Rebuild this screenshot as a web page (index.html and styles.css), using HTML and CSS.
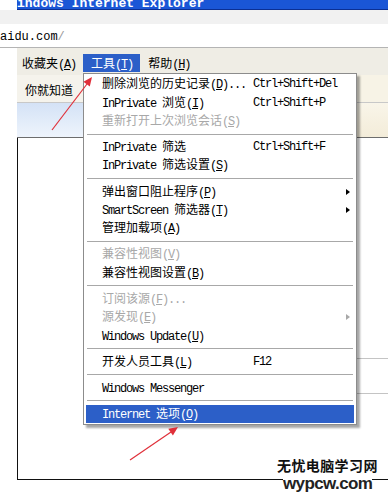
FILE: index.html
```html
<!DOCTYPE html>
<html>
<head>
<meta charset="utf-8">
<title>Internet Explorer 工具菜单</title>
<link rel="stylesheet" href="styles.css">
</head>
<body>
<div class="screen">
  <div class="titlebar"><span class="title">indows Internet Explorer</span></div>
  <div class="addrbar">
    <div class="addr-top"></div>
    <div class="addr-field"><span class="url">aidu.com<span class="slash">/</span></span></div>
  </div>
  <div class="frame">
    <div class="menubar">
      <span class="mb-item first">收藏夹<span class="m">(<u>A</u>)</span></span>
      <span class="mb-item active">工具<span class="m">(<u>T</u>)</span></span>
      <span class="mb-item">帮助<span class="m">(<u>H</u>)</span></span>
    </div>
    <div class="tabrow"><div class="tab">你就知道</div><div class="tab-rest"></div></div>
    <div class="cmdbar"><div class="cmd-left"></div><div class="cmd-rest"></div></div>
    <div class="content">
      <div class="rule"></div>
      <div class="rule"></div>
    </div>
  </div>

  <div class="dropdown">
    <div class="item"><span class="lbl">删除浏览的历史记录<span class="m">(<u>D</u>)...</span></span><span class="key m">Ctrl+Shift+Del</span></div>
    <div class="item"><span class="lbl"><span class="m">InPrivate </span>浏览<span class="m">(<u>I</u>)</span></span><span class="key m">Ctrl+Shift+P</span></div>
    <div class="item dis"><span class="lbl">重新打开上次浏览会话<span class="m">(<u>S</u>)</span></span></div>
    <div class="sep"></div>
    <div class="item"><span class="lbl"><span class="m">InPrivate </span>筛选</span><span class="key m">Ctrl+Shift+F</span></div>
    <div class="item"><span class="lbl"><span class="m">InPrivate </span>筛选设置<span class="m">(<u>S</u>)</span></span></div>
    <div class="sep"></div>
    <div class="item"><span class="lbl">弹出窗口阻止程序<span class="m">(<u>P</u>)</span></span><span class="sub"></span></div>
    <div class="item"><span class="lbl"><span class="m">SmartScreen </span>筛选器<span class="m">(<u>T</u>)</span></span><span class="sub"></span></div>
    <div class="item"><span class="lbl">管理加载项<span class="m">(<u>A</u>)</span></span></div>
    <div class="sep"></div>
    <div class="item dis"><span class="lbl">兼容性视图<span class="m">(<u>V</u>)</span></span></div>
    <div class="item"><span class="lbl">兼容性视图设置<span class="m">(<u>B</u>)</span></span></div>
    <div class="sep"></div>
    <div class="item dis"><span class="lbl">订阅该源<span class="m">(<u>F</u>)...</span></span></div>
    <div class="item dis"><span class="lbl">源发现<span class="m">(<u>E</u>)</span></span><span class="sub"></span></div>
    <div class="item"><span class="lbl"><span class="m">Windows Update(<u>U</u>)</span></span></div>
    <div class="sep"></div>
    <div class="item"><span class="lbl">开发人员工具<span class="m">(<u>L</u>)</span></span><span class="key m">F12</span></div>
    <div class="sep"></div>
    <div class="item"><span class="lbl"><span class="m">Windows Messenger</span></span></div>
    <div class="sep"></div>
    <div class="item hl"><span class="lbl"><span class="m">Internet </span>选项<span class="m">(<u>O</u>)</span></span></div>
  </div>

  <svg class="arrows" width="388" height="497" viewBox="0 0 388 497">
    <line x1="52" y1="130" x2="87" y2="84" stroke="#e0303a" stroke-width="1.2"/>
    <polygon points="92,77 89.8,86.6 83.4,81.8" fill="#e0303a"/>
    <line x1="130" y1="460" x2="171" y2="432" stroke="#e0303a" stroke-width="1.2"/>
    <polygon points="178,427 172.9,435.4 168.3,428.8" fill="#e0303a"/>
  </svg>

  <div class="watermark">
    <div class="wm-cn">无忧电脑学习网</div>
    <div class="wm-en">wypcw.com</div>
  </div>
</div>
</body>
</html>
```

FILE: styles.css
```css
* { box-sizing: border-box; margin: 0; padding: 0; }
html, body { width: 388px; height: 497px; overflow: hidden; background: #fff; }
body { font-family: "Noto Sans CJK SC", "Noto Sans", sans-serif; font-size: 12px; color: #000; }

.screen { position: relative; width: 388px; height: 497px; }

.titlebar {
  margin-left: 17px; height: 10px; background: #1a56d6;
  border-bottom: 1px solid #0b2f93;
  display: flex; align-items: flex-end; overflow: hidden;
}
.title {
  font-family: "Liberation Mono", monospace; font-weight: bold; font-size: 13px;
  line-height: 13px; color: #fff; white-space: nowrap; margin-bottom: -1px;
}

.addrbar { height: 38px; border-bottom: 1px solid #b4b4b4; display: flex; flex-direction: column; }
.addr-top { height: 14px; background: #f1f1f1; }
.addr-field { flex: 1; background: #fff; padding-top: 2px; }
.url { font-family: "Liberation Mono", monospace; font-size: 12px; line-height: 20px; }
.slash { color: #999; }

.frame { margin-left: 17px; }

.menubar { height: 27px; background: #efede5; display: flex; padding-top: 6px; }
.mb-item { height: 18px; line-height: 18px; padding: 0 7px 0 8px; white-space: nowrap; }
.mb-item.first { padding-left: 5px; }
.mb-item.active { background: #2c5fc8; color: #fff; }

.tabrow { height: 28px; display: flex; border-bottom: 1px solid #c8c8c8; }
.tab { width: 66px; background: #f5f3ec; padding: 3px 0 0 8px; line-height: 24px; }
.tab-rest { flex: 1; background: #f7f3e6; }

.cmdbar { height: 35px; display: flex; border-bottom: 1px solid #6d6d6d; }
.cmd-left { width: 66px; background: linear-gradient(#d4e2f6, #eef4fc); }
.cmd-rest { flex: 1; background: linear-gradient(#f9f5e9, #f3ecd9); }

.content {
  height: 342px; border-left: 1px solid #111; border-bottom: 1px solid #111;
  display: flex; flex-direction: column; padding-top: 220px; gap: 34px;
}
.rule { height: 1px; background: #c4c4c4; margin-left: 200px; }

.dropdown {
  position: absolute; left: 83px; top: 73px; width: 274px;
  background: #fff; border: 1px solid #8c8c8c;
  box-shadow: 3px 3px 2px rgba(0, 0, 0, 0.35);
  padding: 1px 2px;
}
.item { height: 18.4px; display: flex; align-items: center; padding-left: 16px; white-space: nowrap; line-height: 18px; }
.lbl { flex: 0 0 151px; }
.sub {
  margin-left: auto; margin-right: 4px; width: 0; height: 0;
  border-left: 4px solid #000; border-top: 3.5px solid transparent; border-bottom: 3.5px solid transparent;
}
.item.dis { color: #a8a8a8; }
.item.dis .sub { border-left-color: #a8a8a8; }
.item.hl { background: #2c5fc8; color: #fff; }
.sep { height: 7.7px; display: flex; align-items: center; padding: 0 1px; }
.sep::after { content: ""; flex: 1; height: 1px; background: #a8a8a8; }

.m { font-family: "Liberation Mono", monospace; letter-spacing: -1.2px; }

.arrows { position: absolute; left: 0; top: 0; pointer-events: none; }

.watermark { position: absolute; left: 277px; top: 457px; }
.wm-cn { font-size: 14px; font-weight: bold; line-height: 16px; letter-spacing: 0.4px; color: #111; }
.wm-en {
  font-family: "Liberation Sans", Arial, sans-serif; font-weight: bold; font-size: 17px;
  line-height: 16px; letter-spacing: -0.6px; color: #222; margin: 3px 0 0 6px;
  width: fit-content; background: #fff;
}
```
